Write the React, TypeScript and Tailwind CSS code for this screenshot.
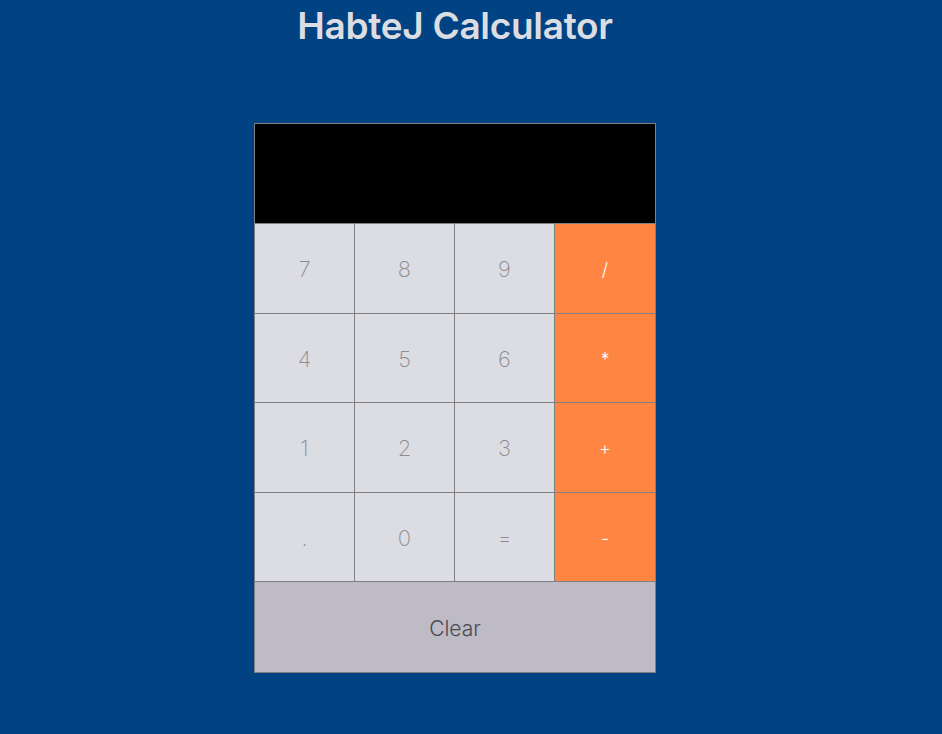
const keys = [
  ["7", "8", "9", "/"],
  ["4", "5", "6", "*"],
  ["1", "2", "3", "+"],
  [".", "0", "=", "-"],
];

const rowHeights = ["h-[89px]", "h-[88px]", "h-[89px]", "h-[88px]"];

export default function App() {
  return (
    <div className="min-h-[734px] w-full bg-[#004282] font-['Inter',sans-serif]">
      <div className="w-[910px] flex flex-col items-center">
        <h1 className="mt-[3px] text-[37px] leading-[46px] font-semibold text-[#dcdde3] tracking-[-0.3px]">
          HabteJ Calculator
        </h1>

        <div className="mt-[74px] w-[402px] bg-[#808080] p-px flex flex-col gap-px">
          <div className="h-[99px] bg-black" />
          {keys.map((row, r) => (
            <div key={r} className={`grid grid-cols-[99px_99px_99px_100px] gap-px ${rowHeights[r]}`}>
              {row.map((k, i) =>
                i === 3 ? (
                  <button
                    key={k}
                    className="bg-[#ff8642] text-white text-[18px] font-light pt-[2px] flex items-center justify-center"
                  >
                    {k}
                  </button>
                ) : (
                  <button
                    key={k}
                    className="bg-[#dcdde2] text-[#8c8c8c] text-[22px] font-extralight pt-[2px] flex items-center justify-center"
                  >
                    {k}
                  </button>
                )
              )}
            </div>
          ))}
          <button className="h-[90px] bg-[#bebac6] text-[#4a4a55] text-[21px] font-light pt-[4px] flex items-center justify-center">
            Clear
          </button>
        </div>
      </div>
    </div>
  );
}
